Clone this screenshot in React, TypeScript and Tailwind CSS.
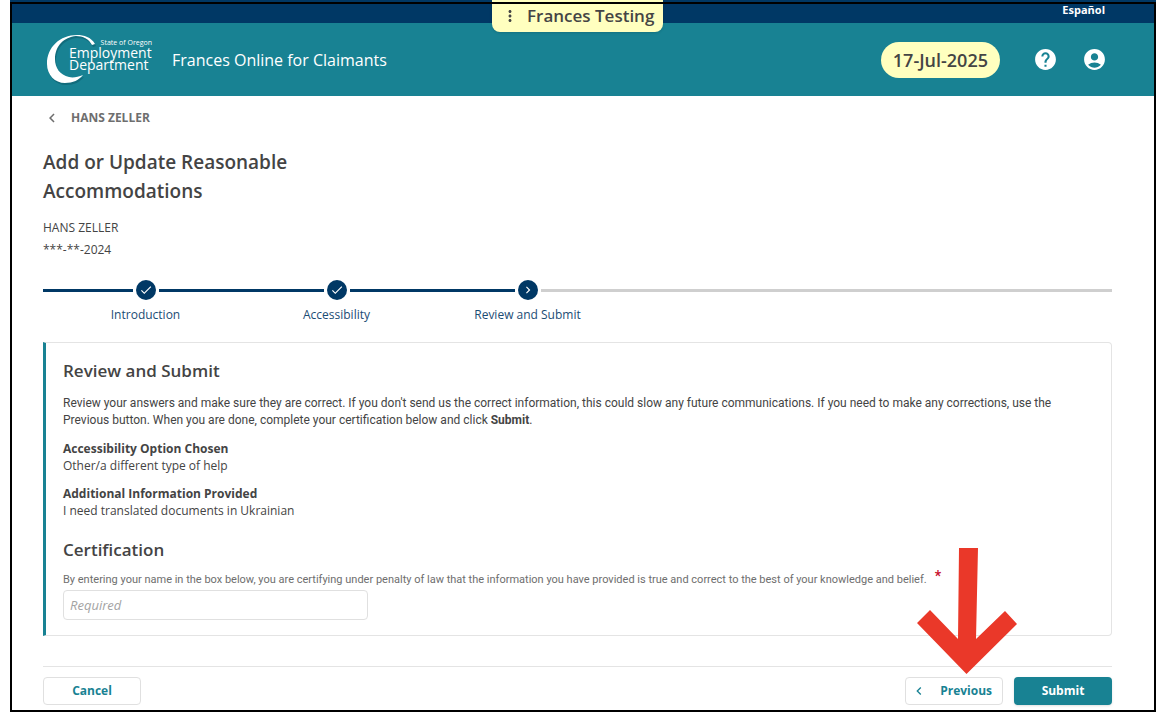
import type { ReactNode } from 'react';
import { MdAccountCircle, MdCheck, MdChevronLeft, MdChevronRight, MdHelp, MdMoreVert } from 'react-icons/md';

interface StepProps {
  label: string;
  state: 'done' | 'current';
}

function Logo() {
  return (
    <svg width="110" height="52" viewBox="0 0 110 52" role="img" aria-label="State of Oregon Employment Department">
      <path
        fill="#0c5666"
        opacity="0.5"
        transform="translate(1 1)"
        d="M49 11C45 4 38 1 31 1C14 1 1 14 1 31C1 42 9 50 19 50C27 50 33 47 37 42C32 44 27 45 23 44C14 42 9 35 9 26C9 13 18 4 30 3C37 3 43 6 46 12Z"
      />
      <path
        fill="#fff"
        d="M49 10C45 3 38 1 31 1C14 1 1 13 1 30C1 41 9 49 19 49C27 49 33 46 37 41C32 43 27 44 23 43C14 41 9 34 9 25C9 12 18 3 30 2C37 2 43 5 46 11Z"
      />
      <g fill="#fff" fontFamily="'Open Sans', sans-serif">
        <text x="106" y="11" fontSize="7" textAnchor="end">State of Oregon</text>
        <text x="23" y="24" fontSize="14">Employment</text>
        <text x="23" y="36" fontSize="14">Department</text>
      </g>
    </svg>
  );
}

function Step({ label, state }: StepProps) {
  const current = state === 'current';

  return (
    <li className="w-[191px] shrink-0" aria-current={current ? 'step' : undefined}>
      <div className="flex items-center gap-[3px]">
        <span className="h-[3px] flex-1 bg-[#003865]" />
        <span className="flex size-5 items-center justify-center rounded-full bg-[#003865] text-white">
          {current ? <MdChevronRight size={14} /> : <MdCheck size={14} />}
        </span>
        <span className={current ? 'h-[3px] flex-1 bg-[#cfcfcf]' : 'h-[3px] flex-1 bg-[#003865]'} />
      </div>
      <p className="mt-[5px] text-center text-xs leading-5 text-[#1b4c74]">{label}</p>
    </li>
  );
}

function Answer({ title, children }: { title: string; children: ReactNode }) {
  return (
    <div className="mt-[11px]">
      <dt className="font-bold">{title}</dt>
      <dd>{children}</dd>
    </div>
  );
}

export default function App() {
  return (
    <div className="bg-white pr-[9px] pl-[10px] font-['Open_Sans',sans-serif] text-xs text-[#444]">
      <div className="relative pb-[7px]">
        <div className="flex h-[23px] items-start justify-end bg-[#003865] pt-[2px] pr-[51px]">
          <a href="#es" className="text-[11px] leading-4 font-bold text-white">Español</a>
        </div>

        <button
          type="button"
          className="absolute top-0 left-[482px] flex h-8 items-center gap-2 rounded-b-lg bg-[#ffffbf] px-[9px] text-[17px] font-semibold shadow"
        >
          <MdMoreVert size={18} />
          Frances Testing
        </button>

        <header className="flex h-[73px] items-center bg-[#188293] pr-[49px] pl-9 text-white">
          <Logo />
          <span className="ml-4 pt-px text-base">Frances Online for Claimants</span>
          <span className="ml-auto rounded-full bg-[#ffffbf] px-3 py-1 text-lg leading-7 font-semibold text-[#444]">
            17-Jul-2025
          </span>
          <button type="button" aria-label="Help" className="ml-[33px]">
            <MdHelp size={25} />
          </button>
          <button type="button" aria-label="Account" className="ml-6">
            <MdAccountCircle size={25} />
          </button>
        </header>

        <main className="pr-11 pl-[33px]">
          <a href="#account" className="flex items-center gap-[10px] pt-3 leading-5 font-bold text-[#6e6e6e]">
            <MdChevronLeft size={18} />
            HANS ZELLER
          </a>

          <h1 className="mt-5 max-w-[270px] text-[19px] leading-[29px] font-semibold">
            Add or Update Reasonable Accommodations
          </h1>
          <p className="mt-[11px] leading-[22px]">
            HANS ZELLER
            <br />
            ***-**-2024
          </p>

          <ol className="mt-[19px] flex">
            <li aria-hidden="true" className="mt-[9px] h-[3px] w-[7px] bg-[#003865]" />
            <Step label="Introduction" state="done" />
            <Step label="Accessibility" state="done" />
            <Step label="Review and Submit" state="current" />
            <li aria-hidden="true" className="mt-[9px] h-[3px] flex-1 bg-[#cfcfcf]" />
          </ol>

          <section className="mt-[17px] rounded-r border border-l-[3px] border-[#e4e4e4] border-l-[#188293] pt-[14px] pr-10 pb-[15px] pl-[17px]">
            <h2 className="text-[17px] leading-7 font-semibold">Review and Submit</h2>
            <p className="mt-[10px] font-['Roboto',sans-serif] leading-[17px]">
              Review your answers and make sure they are correct. If you don't send us the correct information, this
              could slow any future communications. If you need to make any corrections, use the Previous button. When
              you are done, complete your certification below and click <strong>Submit</strong>.
            </p>
            <dl className="leading-[17px]">
              <Answer title="Accessibility Option Chosen">Other/a different type of help</Answer>
              <Answer title="Additional Information Provided">I need translated documents in Ukrainian</Answer>
            </dl>

            <h2 className="mt-[17px] text-[17px] leading-7 font-semibold">Certification</h2>
            <label
              htmlFor="certification"
              className="mt-2 flex font-['Roboto',sans-serif] text-[11px] leading-4 text-[#6e6e6e]"
            >
              By entering your name in the box below, you are certifying under penalty of law that the information you
              have provided is true and correct to the best of your knowledge and belief.
              <span className="-mt-1 ml-2 text-sm leading-4 font-bold text-[#c8102e]">*</span>
            </label>
            <input
              id="certification"
              type="text"
              required
              placeholder="Required"
              className="mt-[2px] block h-[30px] w-[305px] rounded-sm border border-[#e0e0e0] px-[6px] text-[13px] placeholder:text-[#a3a3a3] placeholder:italic"
            />
          </section>

          <footer className="relative mt-[30px] flex border-t border-[#e4e4e4] pt-[10px] font-bold text-[#188293]">
            <button type="button" className="h-7 w-[98px] rounded-sm border border-[#e0e0e0]">
              Cancel
            </button>
            <button
              type="button"
              className="ml-auto flex h-7 w-[98px] items-center justify-between rounded-sm border border-[#e0e0e0] pr-[10px] pl-[5px]"
            >
              <MdChevronLeft size={16} />
              Previous
            </button>
            <button type="button" className="ml-[11px] h-7 w-[98px] rounded-sm bg-[#188293] text-white shadow">
              Submit
            </button>
            <svg
              width="100"
              height="128"
              viewBox="0 0 100 128"
              aria-hidden="true"
              className="pointer-events-none absolute right-[95px] bottom-[30px]"
            >
              <path fill="#ea3829" d="M42 1H61L59 92L88 64L100 77L49.500 127L0 76L13 63L41 92Z" />
            </svg>
          </footer>
        </main>

        <div className="pointer-events-none absolute inset-x-0 top-[2px] bottom-0 border-2 border-black" />
      </div>
    </div>
  );
}
